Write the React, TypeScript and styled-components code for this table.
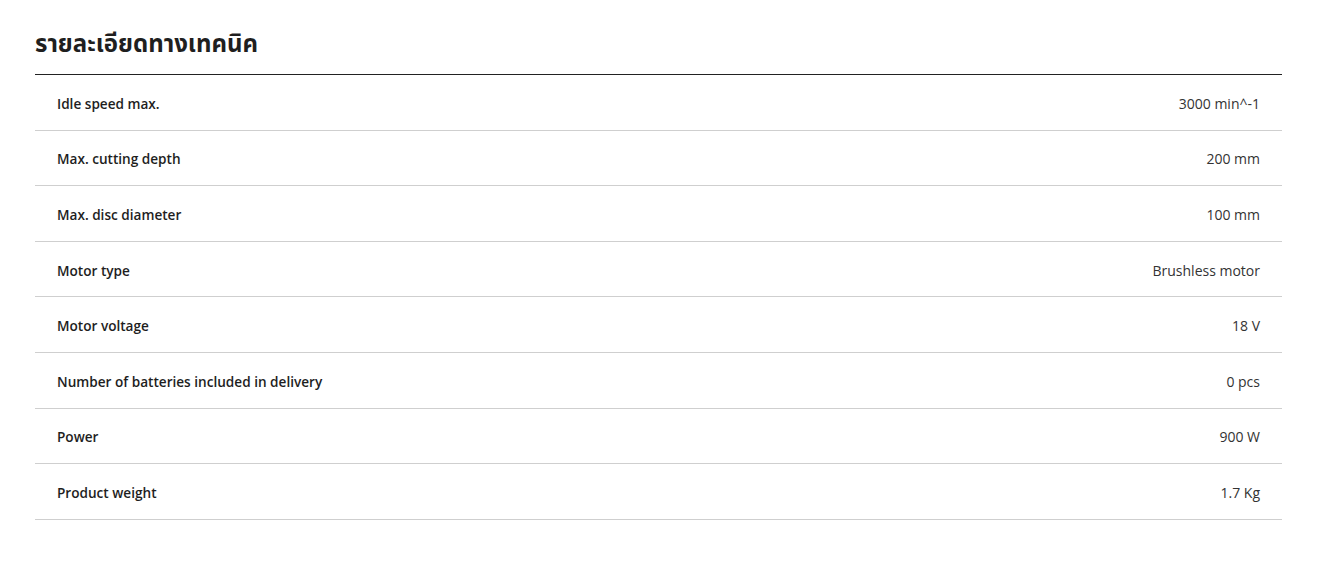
import styled, { createGlobalStyle } from 'styled-components';

// --------------  Elements
const GlobalStyle = createGlobalStyle`
  body {
    margin:0;
    background:#fff;
    font-family:"Open Sans", "Noto Sans", "Noto Sans Thai", sans-serif;
    color:#222;
  }
`;
const Section = styled.section`
  padding:0 48px 0 35px;
`;
const Title = styled.h2`
  margin:0;
  padding:28px 0 17px;
  font-size:24px;
  font-weight:700;
  line-height:29px;
  color:#1f1f1f;
`;
const Table = styled.div`
  border-top:1px solid #222;
`;
const Row = styled.div`
  height:55.6px;
  box-sizing:border-box;
  padding:2px 22px 0;
  display:flex;
  flex-direction:row;
  align-items:center;
  justify-content:space-between;
  border-bottom:1px solid #cfcfcf;
  font-size:14px;
`;
const Label = styled.span`
  font-size:13.6px;
  font-weight:600;
  color:#1e1e1e;
`;
const Value = styled.span`
  font-weight:400;
  color:#333;
`;

// --------------  Data
const specs: [string, string][] = [
  ['Idle speed max.', '3000 min^-1'],
  ['Max. cutting depth', '200 mm'],
  ['Max. disc diameter', '100 mm'],
  ['Motor type', 'Brushless motor'],
  ['Motor voltage', '18 V'],
  ['Number of batteries included in delivery', '0 pcs'],
  ['Power', '900 W'],
  ['Product weight', '1.7 Kg'],
];

export default function App() {
  return (
    <>
      <GlobalStyle />
      <Section>
        <Title>รายละเอียดทางเทคนิค</Title>
        <Table>
          {specs.map(([label, value]) => (
            <Row key={label}>
              <Label>{label}</Label>
              <Value>{value}</Value>
            </Row>
          ))}
        </Table>
      </Section>
    </>
  );
}
